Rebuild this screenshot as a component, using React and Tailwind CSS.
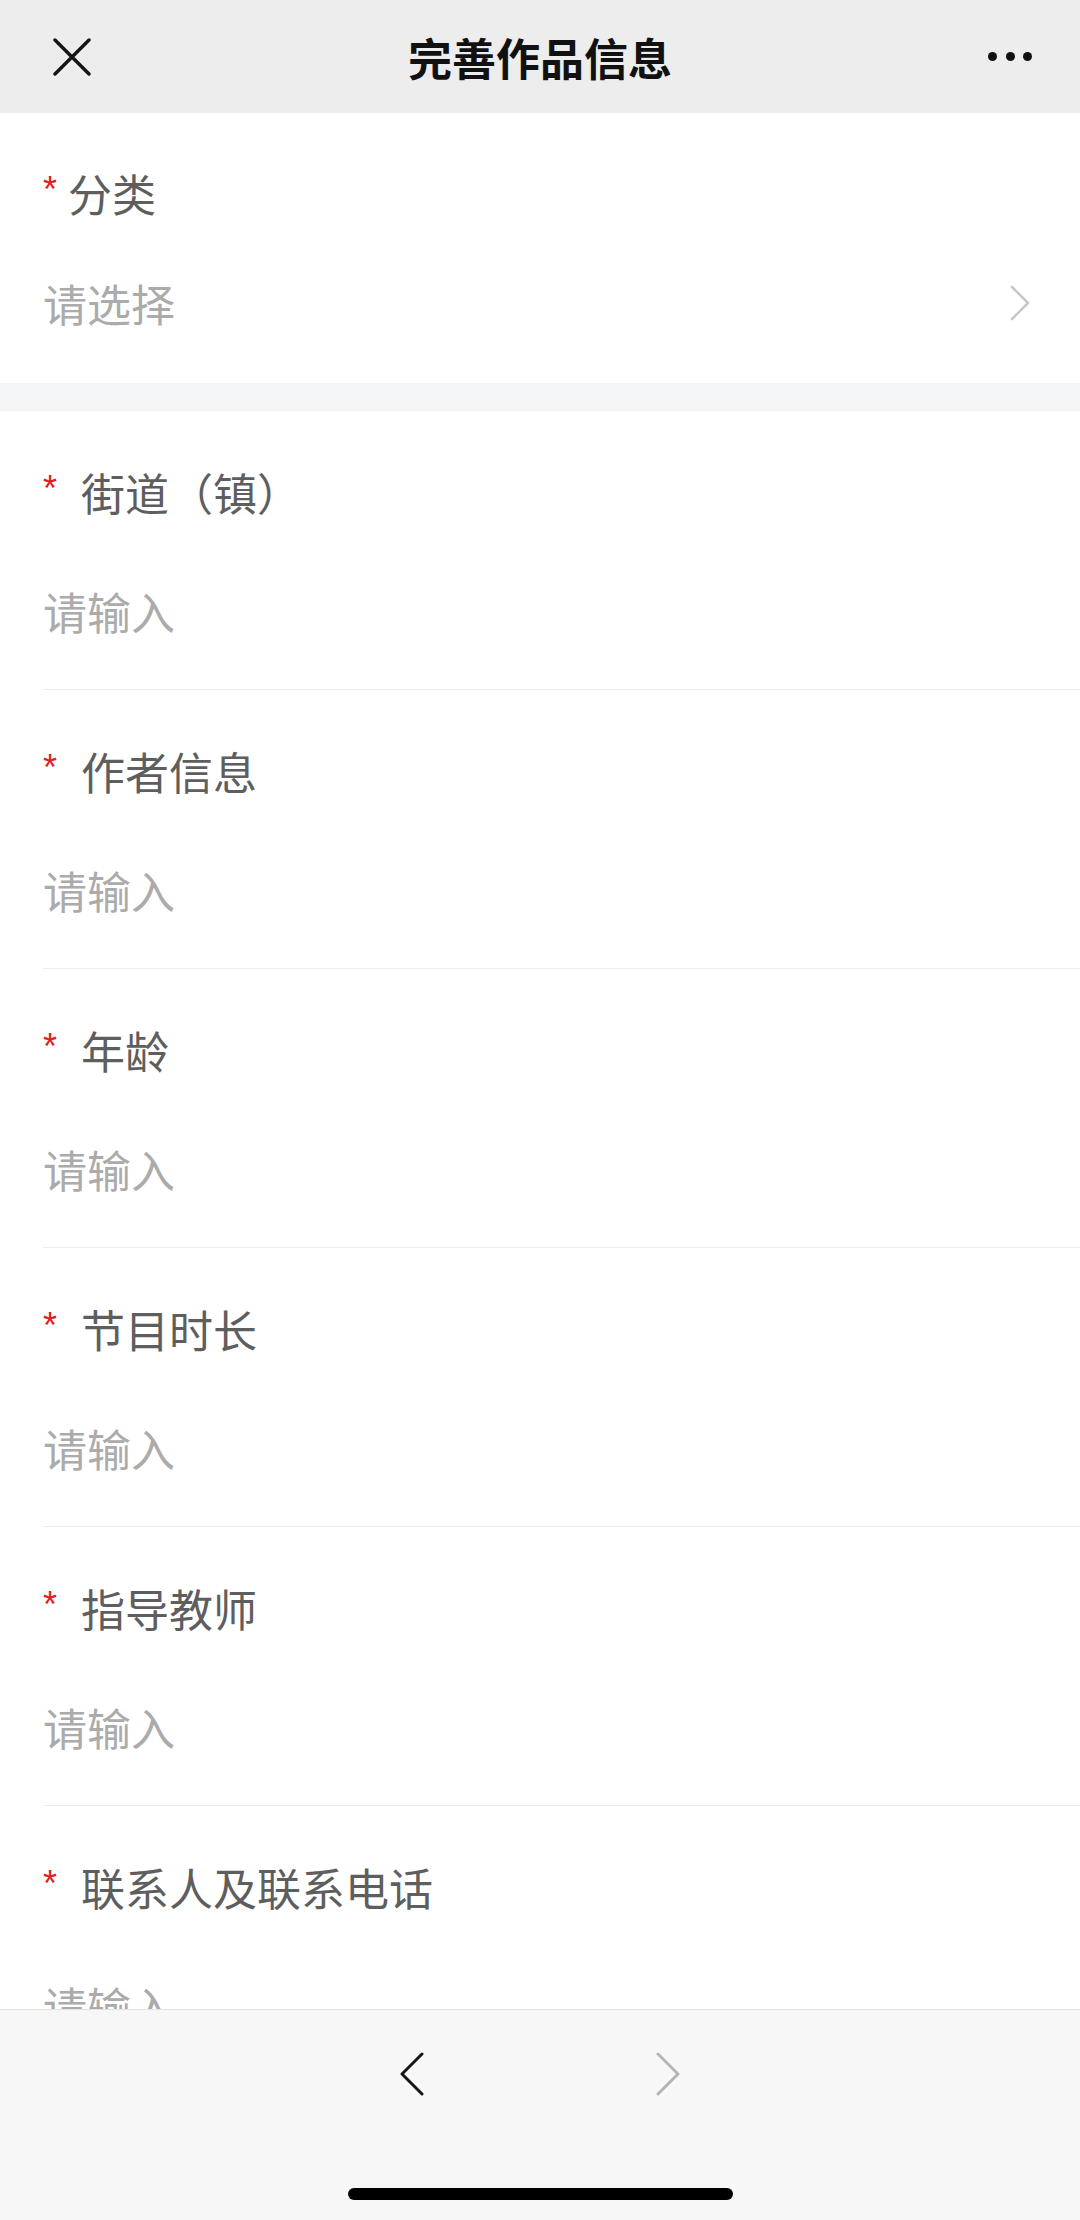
import React from "react";

const cjk = "font-['Noto_Sans_CJK_SC','Noto_Sans_CJK_JP',sans-serif]";

function Star({ spaced }) {
  return (
    <span
      className={`inline-block align-[10px] font-['Liberation_Sans',sans-serif] text-[36px] leading-none text-[#e02020] ${
        spaced ? "mr-[24px]" : "mr-[11px]"
      }`}
    >
      *
    </span>
  );
}

function Field({ label }) {
  return (
    <div className="ml-[43px] border-b border-[#ededed] pt-[51px] pb-[48px]">
      <div className={`h-[60px] leading-[60px] whitespace-nowrap ${cjk} text-[44px] text-[#5e5e5e]`}>
        <Star spaced />
        <span>{label}</span>
      </div>
      <div className={`mt-[59px] h-[60px] leading-[60px] ${cjk} text-[44px] text-[#ababab]`}>请输入</div>
    </div>
  );
}

export default function App() {
  const fields = ["街道（镇）", "作者信息", "年龄", "节目时长", "指导教师", "联系人及联系电话"];
  return (
    <div className="w-[1080px] h-[2220px] flex flex-col overflow-hidden bg-white">
      {/* Header */}
      <div className="h-[113px] shrink-0 bg-[#ededed] grid grid-cols-[1fr_auto_1fr] items-center">
        <div className="justify-self-start ml-[53px] flex items-center">
          <svg width="38" height="38" viewBox="0 0 38 38" fill="none">
            <path d="M2 2L36 36M36 2L2 36" stroke="#151515" strokeWidth="3.4" strokeLinecap="round" />
          </svg>
        </div>
        <div className={`${cjk} text-[44px] font-bold text-[#111111] leading-none`}>完善作品信息</div>
        <div className="justify-self-end mr-[48px] flex items-center gap-[8.5px]">
          <div className="w-[9px] h-[9px] rounded-full bg-[#111111]" />
          <div className="w-[9px] h-[9px] rounded-full bg-[#111111]" />
          <div className="w-[9px] h-[9px] rounded-full bg-[#111111]" />
        </div>
      </div>

      {/* Content */}
      <div className="flex-1 overflow-hidden bg-[#f4f5f7]">
        <div className="bg-white pt-[50px] pb-[50px]">
          <div className={`ml-[43px] h-[60px] leading-[60px] whitespace-nowrap ${cjk} text-[44px] text-[#5e5e5e]`}>
            <Star />
            <span>分类</span>
          </div>
          <div className="mt-[50px] h-[60px] flex items-center justify-between pl-[43px] pr-[48px]">
            <span className={`${cjk} text-[44px] leading-[60px] text-[#ababab]`}>请选择</span>
            <svg width="24" height="38" viewBox="0 0 24 38" fill="none">
              <path d="M4 3L20 19L4 35" stroke="#c8c8c8" strokeWidth="2.6" strokeLinecap="round" strokeLinejoin="round" />
            </svg>
          </div>
        </div>
        <div className="h-[28px]" />
        <div className="bg-white">
          {fields.map((f) => (
            <Field key={f} label={f} />
          ))}
        </div>
      </div>

      {/* Bottom bar */}
      <div className="h-[211px] shrink-0 bg-[#f7f7f7] border-t border-[#e3e3e3] flex flex-col items-center">
        <div className="mt-[42px] flex items-center gap-[230px]">
          <svg width="26" height="44" viewBox="0 0 26 44" fill="none">
            <path d="M23 2L3 22L23 42" stroke="#151515" strokeWidth="3" strokeLinecap="round" strokeLinejoin="round" />
          </svg>
          <svg width="26" height="44" viewBox="0 0 26 44" fill="none">
            <path d="M3 2L23 22L3 42" stroke="#b5b5b5" strokeWidth="3" strokeLinecap="round" strokeLinejoin="round" />
          </svg>
        </div>
        <div className="mt-[92px] w-[385px] h-[12px] rounded-full bg-black" />
      </div>
    </div>
  );
}
